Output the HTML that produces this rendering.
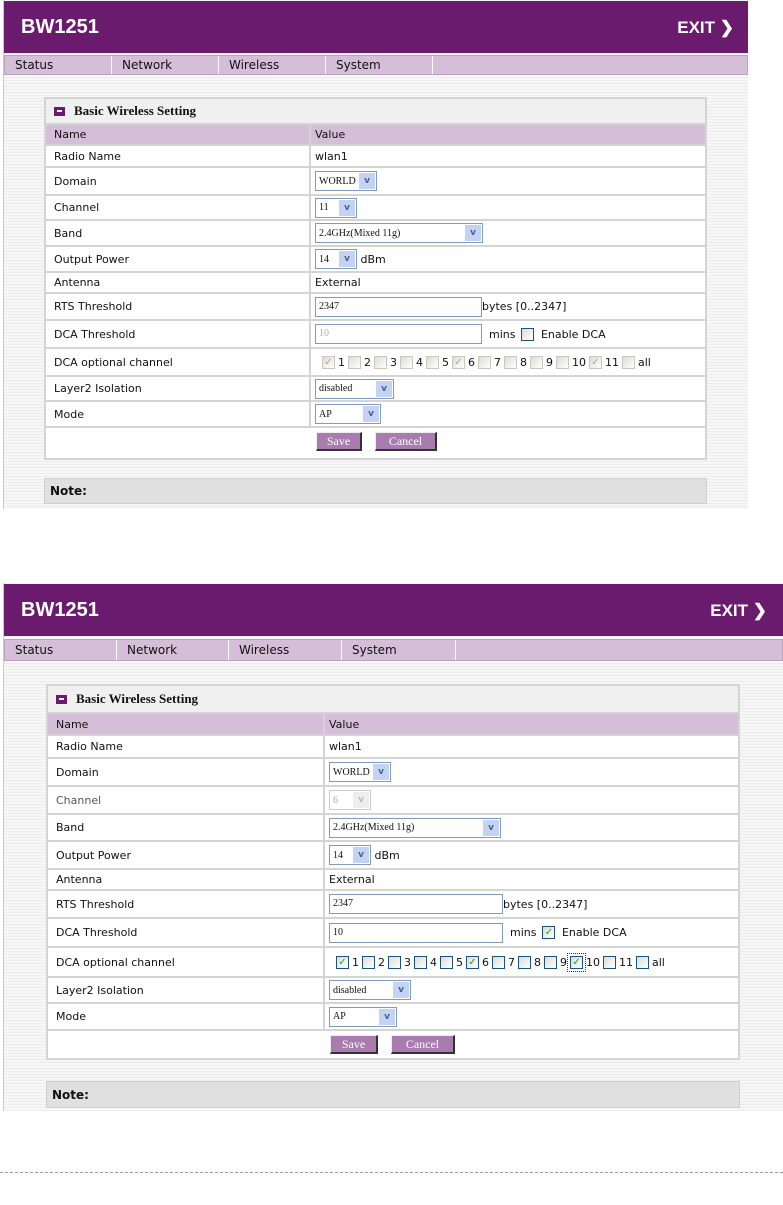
<!DOCTYPE html>
<html><head><meta charset="utf-8"><style>
*{box-sizing:border-box;margin:0;padding:0}
body{width:783px;height:1205px;background:#fff;position:relative;font-family:"DejaVu Sans","Liberation Sans",sans-serif;font-size:11px;color:#111;overflow:hidden}
.shot{position:absolute;background:#f3f3f3;border-left:1px solid #ccc;
 background-image:repeating-linear-gradient(#f7f7f7 0 2px,#ececec 2px 3px)}
.hdr{position:absolute;left:0;right:0;top:0;background:#6a1b6e;color:#fff;font-family:"Liberation Sans",sans-serif;font-weight:bold;font-size:20px}
.hdr .l{position:absolute;left:17px}
.hdr .r{position:absolute;right:14px;font-size:17px}
.nav{position:absolute;left:0;right:0;background:#d5bfd8;border:1px solid #b9a3bc;display:flex;font-size:12px}
.nav div{border-right:1px solid #fff;padding-left:10px}
.panel{position:absolute;background:#fff;border:2px solid #d4d4d4}
.title{background:#f0f0f0;border-bottom:2px solid #d4d4d4;font-family:"Liberation Serif",serif;font-weight:bold;font-size:13px;display:flex;align-items:center;padding-left:8px}
.ic{width:11px;height:9px;background:#6a1b6e;margin-right:9px;position:relative}
.ic:after{content:"";position:absolute;left:3px;top:3px;width:5px;height:2px;background:#fff}
.row{display:flex;border-bottom:2px solid #d4d4d4;align-items:stretch}
.row .n{border-right:2px solid #d4d4d4;padding-left:8px;display:flex;align-items:center}
.row .v{padding-left:4px;display:flex;align-items:center;flex:1;white-space:nowrap}
.hrow{background:#d5bfd8}
.sel{display:inline-flex;border:1px solid #7f9db9;height:20px;align-items:center;font-family:"Liberation Serif",serif;font-size:10px;background:#fff;justify-content:space-between;padding-left:3px}
.sel b{width:16px;height:16px;margin:1px;background:#c3d3f5;color:#4d6185;font-size:9px;display:flex;align-items:center;justify-content:center;font-family:"DejaVu Sans",sans-serif}
.inp{display:inline-block;border:1px solid #7f9db9;height:20px;font-family:"Liberation Serif",serif;font-size:10px;padding:3px 3px}
.cb{display:inline-block;width:13px;height:13px;border:1px solid #1c5180;background:linear-gradient(135deg,#dcdcd6,#fff);margin:0 3px;vertical-align:middle;position:relative;font-size:10px;line-height:11px;text-align:center;color:#21a121}
.cbd{border-color:#cac8bb;color:#aaa}
.btn{display:inline-block;background:#a97bae;color:#fff;font-family:"Liberation Serif",serif;font-size:12px;border-right:2px solid #333;border-bottom:2px solid #333;border-top:1px solid #eee;border-left:1px solid #eee;height:19px;line-height:16px;text-align:center}
.note{position:absolute;background:#e0e0e0;border:1px solid #d0d0d0;font-weight:bold;font-size:12px;padding-left:5px;display:flex;align-items:center}
</style></head><body>

<div class="shot" style="left:3px;top:0;width:745px;height:509px">
 <div class="hdr" style="top:1px;height:52px"><span class="l" style="top:15px">BW1251</span><span class="r" style="top:17px">EXIT ❯</span></div>
 <div class="nav" style="top:55px;height:20px;line-height:18px"><div style="width:107px">Status</div><div style="width:107px">Network</div><div style="width:107px">Wireless</div><div style="width:107px">System</div><div style="flex:1;border:0"></div></div>
 <div class="panel" style="left:40px;top:97px;width:663px;height:363px">
  <div class="title" style="height:26px"><span class="ic"></span>Basic Wireless Setting</div>
  <div class="row hrow" style="height:21px"><div class="n" style="width:265px">Name</div><div class="v">Value</div></div>
  <div class="row" style="height:22px"><div class="n" style="width:265px">Radio Name</div><div class="v">wlan1</div></div>
  <div class="row" style="height:28px"><div class="n" style="width:265px">Domain</div><div class="v"><span class="sel" style="width:62px">WORLD<b>v</b></span></div></div>
  <div class="row" style="height:25px"><div class="n" style="width:265px">Channel</div><div class="v"><span class="sel" style="width:42px">11<b>v</b></span></div></div>
  <div class="row" style="height:26px"><div class="n" style="width:265px">Band</div><div class="v"><span class="sel" style="width:168px">2.4GHz(Mixed 11g)<b>v</b></span></div></div>
  <div class="row" style="height:26px"><div class="n" style="width:265px">Output Power</div><div class="v"><span class="sel" style="width:42px">14<b>v</b></span>&nbsp;dBm</div></div>
  <div class="row" style="height:21px"><div class="n" style="width:265px">Antenna</div><div class="v">External</div></div>
  <div class="row" style="height:27px"><div class="n" style="width:265px">RTS Threshold</div><div class="v"><span class="inp" style="width:167px">2347</span>bytes [0..2347]</div></div>
  <div class="row" style="height:28px"><div class="n" style="width:265px">DCA Threshold</div><div class="v"><span class="inp" style="width:167px;color:#aaa">10</span>&nbsp;&nbsp;mins <span class="cb" style="margin-left:6px"></span>&nbsp;Enable DCA</div></div>
  <div class="row" style="height:28px"><div class="n" style="width:265px">DCA optional channel</div><div class="v" style="padding-left:8px"><span class="cb cbd">✓</span>1<span class="cb cbd"></span>2<span class="cb cbd"></span>3<span class="cb cbd"></span>4<span class="cb cbd"></span>5<span class="cb cbd">✓</span>6<span class="cb cbd"></span>7<span class="cb cbd"></span>8<span class="cb cbd"></span>9<span class="cb cbd"></span>10<span class="cb cbd">✓</span>11<span class="cb cbd"></span>all</div></div>
  <div class="row" style="height:25px"><div class="n" style="width:265px">Layer2 Isolation</div><div class="v"><span class="sel" style="width:79px">disabled<b>v</b></span></div></div>
  <div class="row" style="height:26px"><div class="n" style="width:265px">Mode</div><div class="v"><span class="sel" style="width:66px">AP<b>v</b></span></div></div>
  <div style="height:26px;padding-left:270px;padding-top:4px"><span class="btn" style="width:46px">Save</span><span class="btn" style="width:62px;margin-left:13px">Cancel</span></div>
 </div>
 <div class="note" style="left:40px;top:478px;width:663px;height:26px">Note:</div>
</div>

<div class="shot" style="left:3px;top:583px;width:780px;height:528px">
 <div class="hdr" style="top:1px;height:52px"><span class="l" style="top:15px">BW1251</span><span class="r" style="top:17px;right:16px">EXIT ❯</span></div>
 <div class="nav" style="top:56px;height:22px;line-height:20px"><div style="width:112px">Status</div><div style="width:112px">Network</div><div style="width:113px">Wireless</div><div style="width:114px">System</div><div style="flex:1;border:0"></div></div>
 <div class="panel" style="left:42px;top:101px;width:694px;height:376px">
  <div class="title" style="height:28px"><span class="ic"></span>Basic Wireless Setting</div>
  <div class="row hrow" style="height:22px"><div class="n" style="width:277px">Name</div><div class="v">Value</div></div>
  <div class="row" style="height:23px"><div class="n" style="width:277px">Radio Name</div><div class="v">wlan1</div></div>
  <div class="row" style="height:28px"><div class="n" style="width:277px">Domain</div><div class="v"><span class="sel" style="width:62px">WORLD<b>v</b></span></div></div>
  <div class="row" style="height:28px"><div class="n" style="width:277px;color:#555">Channel</div><div class="v"><span class="sel" style="width:42px;border-color:#ccc;color:#aaa">6<b style="background:#eee;color:#bbb">v</b></span></div></div>
  <div class="row" style="height:27px"><div class="n" style="width:277px">Band</div><div class="v"><span class="sel" style="width:172px">2.4GHz(Mixed 11g)<b>v</b></span></div></div>
  <div class="row" style="height:28px"><div class="n" style="width:277px">Output Power</div><div class="v"><span class="sel" style="width:42px">14<b>v</b></span>&nbsp;dBm</div></div>
  <div class="row" style="height:21px"><div class="n" style="width:277px">Antenna</div><div class="v">External</div></div>
  <div class="row" style="height:28px"><div class="n" style="width:277px">RTS Threshold</div><div class="v"><span class="inp" style="width:174px">2347</span>bytes [0..2347]</div></div>
  <div class="row" style="height:29px"><div class="n" style="width:277px">DCA Threshold</div><div class="v"><span class="inp" style="width:174px">10</span>&nbsp;&nbsp;mins <span class="cb" style="margin-left:6px">✓</span>&nbsp;Enable DCA</div></div>
  <div class="row" style="height:30px"><div class="n" style="width:277px">DCA optional channel</div><div class="v" style="padding-left:8px"><span class="cb">✓</span>1<span class="cb"></span>2<span class="cb"></span>3<span class="cb"></span>4<span class="cb"></span>5<span class="cb">✓</span>6<span class="cb"></span>7<span class="cb"></span>8<span class="cb"></span>9<span class="cb" style="outline:1px dotted #333;outline-offset:2px">✓</span>10<span class="cb"></span>11<span class="cb"></span>all</div></div>
  <div class="row" style="height:26px"><div class="n" style="width:277px">Layer2 Isolation</div><div class="v"><span class="sel" style="width:82px">disabled<b>v</b></span></div></div>
  <div class="row" style="height:27px"><div class="n" style="width:277px">Mode</div><div class="v"><span class="sel" style="width:68px">AP<b>v</b></span></div></div>
  <div style="height:28px;padding-left:282px;padding-top:4px"><span class="btn" style="width:48px">Save</span><span class="btn" style="width:64px;margin-left:13px">Cancel</span></div>
 </div>
 <div class="note" style="left:42px;top:498px;width:694px;height:27px">Note:</div>
</div>

<div style="position:absolute;left:0;right:0;top:1172px;border-top:1px dashed #999"></div>
</body></html>
